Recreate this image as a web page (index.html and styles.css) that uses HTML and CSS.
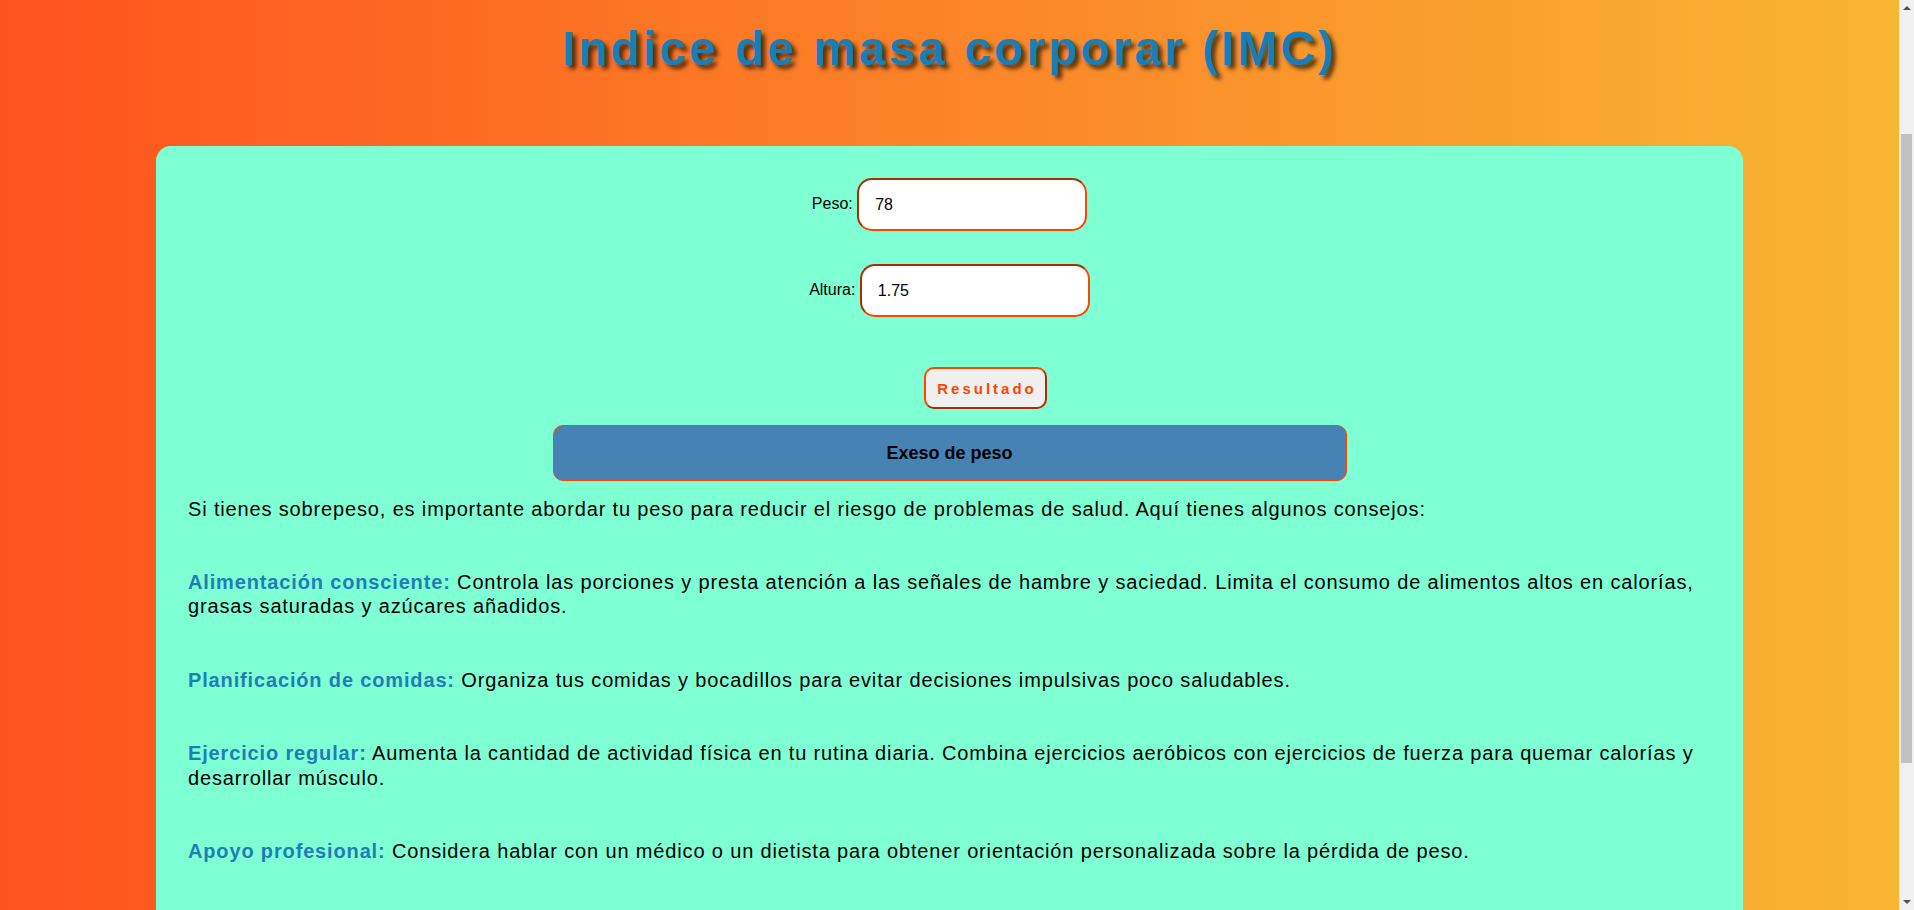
FILE: index.html
```html
<!DOCTYPE html>
<html lang="es">
<head>
<meta charset="utf-8">
<title>Indice de masa corporar (IMC)</title>
<link rel="stylesheet" href="styles.css">
</head>
<body>
<div class="page">
  <h1 class="title">Indice de masa corporar (IMC)</h1>
  <main class="card">
    <form class="form">
      <div class="row"><label class="label" for="peso">Peso:</label> <input class="field" id="peso" type="text" value="78"></div>
      <div class="row"><label class="label" for="altura">Altura:</label> <input class="field" id="altura" type="text" value="1.75"></div>
      <div class="row row-btn"><button class="btn" type="button">Resultado</button></div>
    </form>
    <div class="result">Exeso de peso</div>
    <p class="intro">Si tienes sobrepeso, es importante abordar tu peso para reducir el riesgo de problemas de salud. Aquí tienes algunos consejos:</p>
    <div class="tips">
      <p class="tip"><span class="tip-title">Alimentación consciente:</span> Controla las porciones y presta atención a las señales de hambre y saciedad. Limita el consumo de alimentos altos en calorías, grasas saturadas y azúcares añadidos.</p>
      <p class="tip"><span class="tip-title">Planificación de comidas:</span> Organiza tus comidas y bocadillos para evitar decisiones impulsivas poco saludables.</p>
      <p class="tip"><span class="tip-title">Ejercicio regular:</span> Aumenta la cantidad de actividad física en tu rutina diaria. Combina ejercicios aeróbicos con ejercicios de fuerza para quemar calorías y desarrollar músculo.</p>
      <p class="tip"><span class="tip-title">Apoyo profesional:</span> Considera hablar con un médico o un dietista para obtener orientación personalizada sobre la pérdida de peso.</p>
    </div>
  </main>
</div>
<div class="scrollbar" aria-hidden="true">
  <span class="sb-arrow sb-up"></span>
  <span class="sb-thumb"></span>
  <span class="sb-arrow sb-down"></span>
</div>
</body>
</html>
```
FILE: styles.css
```css
html, body {
  margin: 0;
  padding: 0;
}
body {
  font-family: "Liberation Sans", Arial, sans-serif;
  background: #f1f1f1;
  color: #000;
}
.page {
  width: calc(100% - 15px);
  min-height: 100vh;
  background: linear-gradient(to right, #ff531e, #f8b632);
  overflow: hidden;
}
.title {
  margin: 0;
  padding-top: 21px;
  text-align: center;
  font-size: 48px;
  font-weight: bold;
  letter-spacing: 3px;
  color: #1a7db3;
  text-shadow: 4px 4px 4px rgba(0, 0, 0, 0.65);
}
.card {
  box-sizing: border-box;
  width: 1587px;
  margin: 70px auto 0;
  padding: 32px 32px 380px;
  background: #7fffd4;
  border-radius: 15px;
}
.form {
  margin: 0;
}
.row {
  text-align: center;
  font-size: 16px;
  margin-bottom: 33px;
}
.row-btn {
  margin-bottom: 16px;
}
.label {
  font-size: 16px;
}
.field {
  box-sizing: border-box;
  width: 230px;
  height: 53px;
  padding: 0 16px;
  font-family: "Liberation Sans", Arial, sans-serif;
  font-size: 16px;
  color: #000;
  background: #fff;
  border: 2px inset #ff4500;
  border-radius: 15px;
  outline: none;
  vertical-align: middle;
}
.btn {
  box-sizing: border-box;
  width: 123px;
  height: 42px;
  margin: 17px 0 0 72px;
  font-family: "Liberation Sans", Arial, sans-serif;
  font-size: 15px;
  font-weight: bold;
  letter-spacing: 3px;
  color: #ff4500;
  background: #f0f0f0;
  border: 2px outset #ff4500;
  border-radius: 10px;
  padding: 0 0 0 3px;
}
.result {
  box-sizing: border-box;
  width: 794px;
  height: 56px;
  margin: 0 auto;
  display: flex;
  align-items: center;
  justify-content: center;
  background: #4682b4;
  border: 1px solid #ff4500;
  border-radius: 10px;
  font-size: 18px;
  font-weight: bold;
}
.intro {
  margin: 17px 0 0;
  font-size: 20px;
  letter-spacing: 0.85px;
}
.tips {
  display: flex;
  flex-direction: column;
  gap: 49px;
  margin-top: 49px;
}
.tip {
  margin: 0;
  font-size: 20px;
  letter-spacing: 0.85px;
  line-height: 24.4px;
}
.tip-title {
  font-weight: bold;
  color: #1f7db5;
}
.scrollbar {
  position: fixed;
  top: 0;
  right: 0;
  width: 15px;
  height: 100%;
  background: #f1f1f1;
}
.sb-arrow {
  position: absolute;
  left: 4px;
  width: 0;
  height: 0;
  border-left: 4px solid transparent;
  border-right: 4px solid transparent;
}
.sb-up {
  top: 6px;
  border-bottom: 4px solid #505050;
}
.sb-down {
  bottom: 6px;
  border-top: 4px solid #505050;
}
.sb-thumb {
  position: absolute;
  top: 134px;
  left: 2px;
  width: 11px;
  height: 629px;
  background: #c1c1c1;
}
```
